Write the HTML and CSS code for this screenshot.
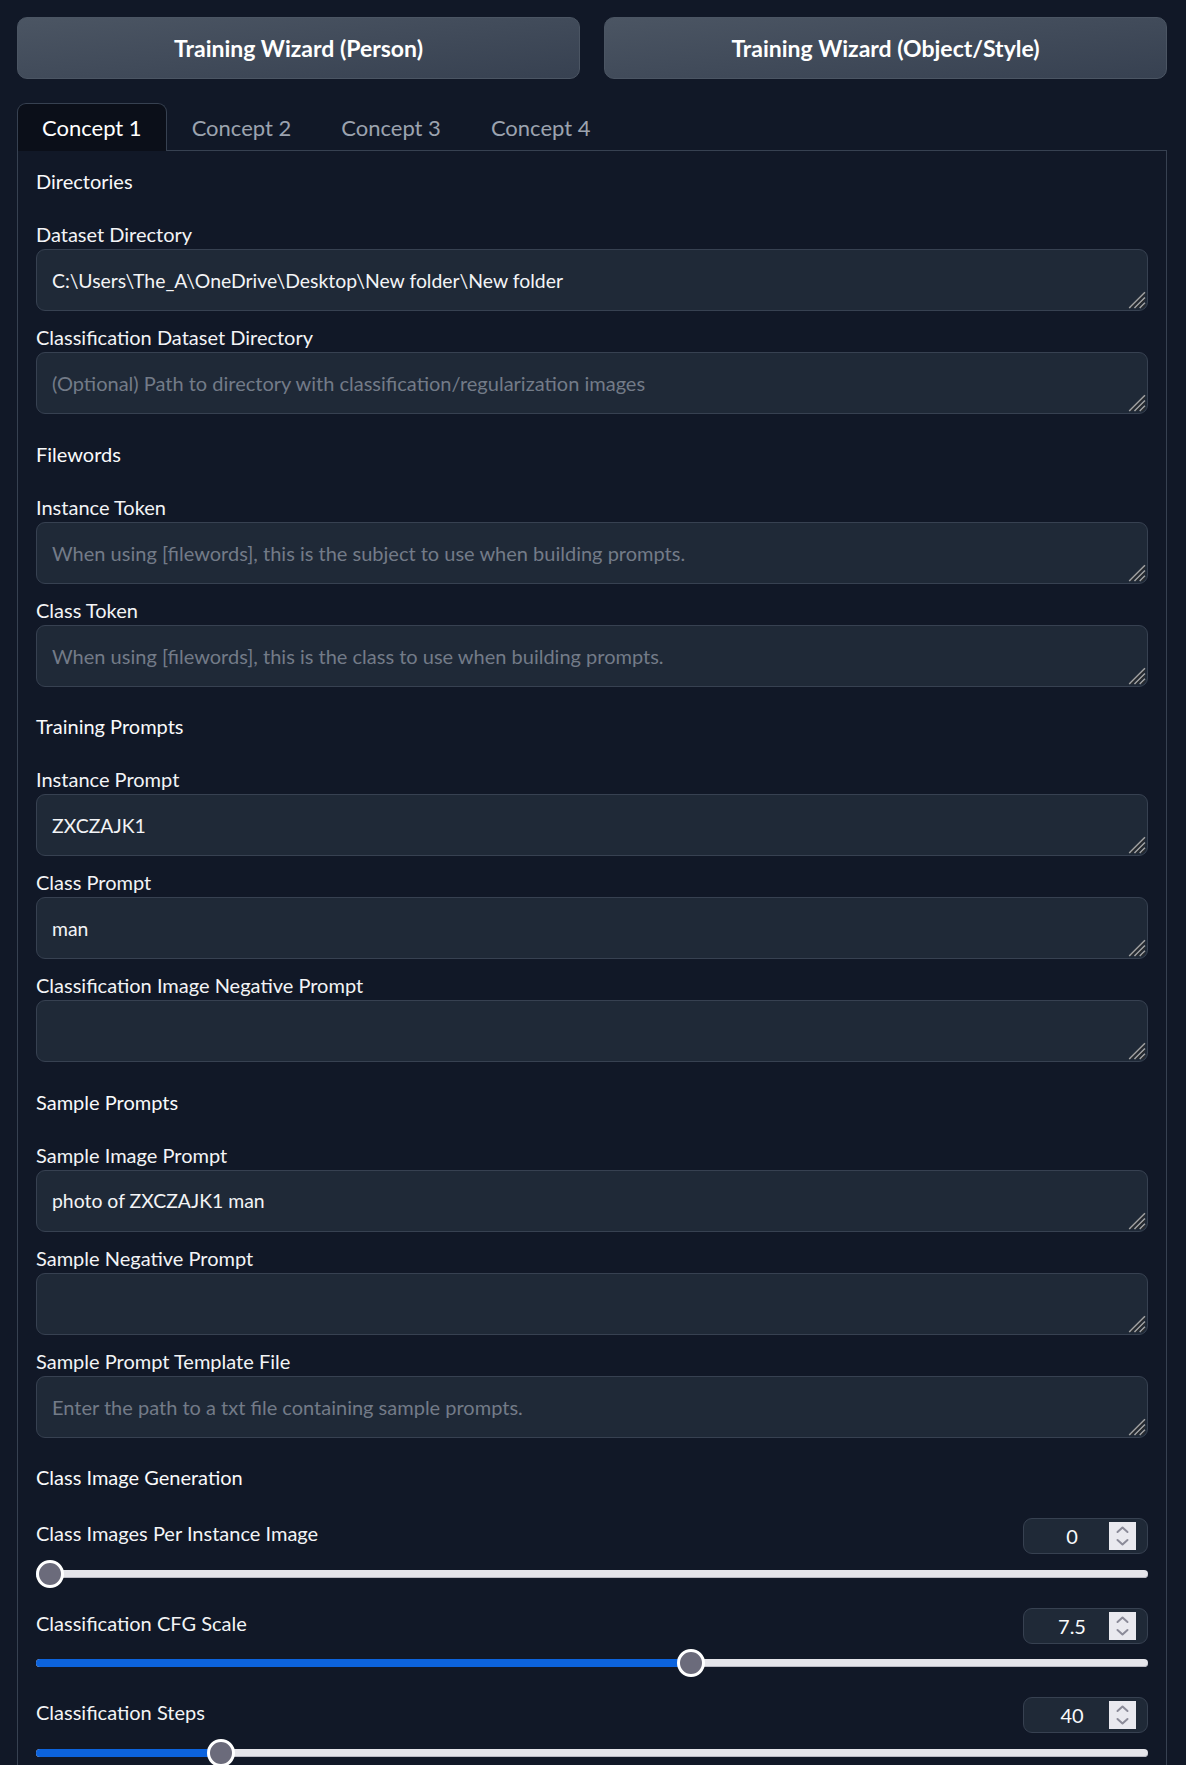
FILE: index.html
```html
<!DOCTYPE html>
<html lang="en">
<head>
<meta charset="utf-8">
<title>Dreambooth Concepts</title>
<link rel="stylesheet" href="styles.css">
</head>
<body>
<div class="app">
  <div class="wizard-row">
    <button class="wizard-btn">Training Wizard (Person)</button>
    <button class="wizard-btn">Training Wizard (Object/Style)</button>
  </div>

  <div class="tabs">
    <div class="tab-nav">
      <div class="tab selected">Concept 1</div>
      <div class="tab">Concept 2</div>
      <div class="tab">Concept 3</div>
      <div class="tab">Concept 4</div>
    </div>

    <div class="tab-panel">
      <div class="section-title">Directories</div>

      <div class="field">
        <div class="field-label">Dataset Directory</div>
        <div class="textbox"><span class="value">C:\Users\The_A\OneDrive\Desktop\New folder\New folder</span><svg class="grip" viewBox="0 0 20 20"><g class="grip-light"><line x1="4" y1="19" x2="19" y2="4"/><line x1="9" y1="19" x2="19" y2="9"/><line x1="14" y1="19" x2="19" y2="14"/></g><g class="grip-dark"><line x1="6" y1="19" x2="19" y2="6"/><line x1="11" y1="19" x2="19" y2="11"/><line x1="16" y1="19" x2="19" y2="16"/></g></svg></div>
      </div>

      <div class="field">
        <div class="field-label">Classification Dataset Directory</div>
        <div class="textbox"><span class="placeholder">(Optional) Path to directory with classification/regularization images</span><svg class="grip" viewBox="0 0 20 20"><g class="grip-light"><line x1="4" y1="19" x2="19" y2="4"/><line x1="9" y1="19" x2="19" y2="9"/><line x1="14" y1="19" x2="19" y2="14"/></g><g class="grip-dark"><line x1="6" y1="19" x2="19" y2="6"/><line x1="11" y1="19" x2="19" y2="11"/><line x1="16" y1="19" x2="19" y2="16"/></g></svg></div>
      </div>

      <div class="section-title">Filewords</div>

      <div class="field">
        <div class="field-label">Instance Token</div>
        <div class="textbox"><span class="placeholder">When using [filewords], this is the subject to use when building prompts.</span><svg class="grip" viewBox="0 0 20 20"><g class="grip-light"><line x1="4" y1="19" x2="19" y2="4"/><line x1="9" y1="19" x2="19" y2="9"/><line x1="14" y1="19" x2="19" y2="14"/></g><g class="grip-dark"><line x1="6" y1="19" x2="19" y2="6"/><line x1="11" y1="19" x2="19" y2="11"/><line x1="16" y1="19" x2="19" y2="16"/></g></svg></div>
      </div>

      <div class="field">
        <div class="field-label">Class Token</div>
        <div class="textbox"><span class="placeholder">When using [filewords], this is the class to use when building prompts.</span><svg class="grip" viewBox="0 0 20 20"><g class="grip-light"><line x1="4" y1="19" x2="19" y2="4"/><line x1="9" y1="19" x2="19" y2="9"/><line x1="14" y1="19" x2="19" y2="14"/></g><g class="grip-dark"><line x1="6" y1="19" x2="19" y2="6"/><line x1="11" y1="19" x2="19" y2="11"/><line x1="16" y1="19" x2="19" y2="16"/></g></svg></div>
      </div>

      <div class="section-title">Training Prompts</div>

      <div class="field">
        <div class="field-label">Instance Prompt</div>
        <div class="textbox"><span class="value">ZXCZAJK1</span><svg class="grip" viewBox="0 0 20 20"><g class="grip-light"><line x1="4" y1="19" x2="19" y2="4"/><line x1="9" y1="19" x2="19" y2="9"/><line x1="14" y1="19" x2="19" y2="14"/></g><g class="grip-dark"><line x1="6" y1="19" x2="19" y2="6"/><line x1="11" y1="19" x2="19" y2="11"/><line x1="16" y1="19" x2="19" y2="16"/></g></svg></div>
      </div>

      <div class="field">
        <div class="field-label">Class Prompt</div>
        <div class="textbox"><span class="value">man</span><svg class="grip" viewBox="0 0 20 20"><g class="grip-light"><line x1="4" y1="19" x2="19" y2="4"/><line x1="9" y1="19" x2="19" y2="9"/><line x1="14" y1="19" x2="19" y2="14"/></g><g class="grip-dark"><line x1="6" y1="19" x2="19" y2="6"/><line x1="11" y1="19" x2="19" y2="11"/><line x1="16" y1="19" x2="19" y2="16"/></g></svg></div>
      </div>

      <div class="field">
        <div class="field-label">Classification Image Negative Prompt</div>
        <div class="textbox"><span class="value"></span><svg class="grip" viewBox="0 0 20 20"><g class="grip-light"><line x1="4" y1="19" x2="19" y2="4"/><line x1="9" y1="19" x2="19" y2="9"/><line x1="14" y1="19" x2="19" y2="14"/></g><g class="grip-dark"><line x1="6" y1="19" x2="19" y2="6"/><line x1="11" y1="19" x2="19" y2="11"/><line x1="16" y1="19" x2="19" y2="16"/></g></svg></div>
      </div>

      <div class="section-title">Sample Prompts</div>

      <div class="field">
        <div class="field-label">Sample Image Prompt</div>
        <div class="textbox"><span class="value">photo of ZXCZAJK1 man</span><svg class="grip" viewBox="0 0 20 20"><g class="grip-light"><line x1="4" y1="19" x2="19" y2="4"/><line x1="9" y1="19" x2="19" y2="9"/><line x1="14" y1="19" x2="19" y2="14"/></g><g class="grip-dark"><line x1="6" y1="19" x2="19" y2="6"/><line x1="11" y1="19" x2="19" y2="11"/><line x1="16" y1="19" x2="19" y2="16"/></g></svg></div>
      </div>

      <div class="field">
        <div class="field-label">Sample Negative Prompt</div>
        <div class="textbox"><span class="value"></span><svg class="grip" viewBox="0 0 20 20"><g class="grip-light"><line x1="4" y1="19" x2="19" y2="4"/><line x1="9" y1="19" x2="19" y2="9"/><line x1="14" y1="19" x2="19" y2="14"/></g><g class="grip-dark"><line x1="6" y1="19" x2="19" y2="6"/><line x1="11" y1="19" x2="19" y2="11"/><line x1="16" y1="19" x2="19" y2="16"/></g></svg></div>
      </div>

      <div class="field">
        <div class="field-label">Sample Prompt Template File</div>
        <div class="textbox"><span class="placeholder">Enter the path to a txt file containing sample prompts.</span><svg class="grip" viewBox="0 0 20 20"><g class="grip-light"><line x1="4" y1="19" x2="19" y2="4"/><line x1="9" y1="19" x2="19" y2="9"/><line x1="14" y1="19" x2="19" y2="14"/></g><g class="grip-dark"><line x1="6" y1="19" x2="19" y2="6"/><line x1="11" y1="19" x2="19" y2="11"/><line x1="16" y1="19" x2="19" y2="16"/></g></svg></div>
      </div>

      <div class="section-title">Class Image Generation</div>

      <div class="slider-field">
        <div class="slider-head">
          <span class="field-label slider-label">Class Images Per Instance Image</span>
          <div class="number"><span class="num-val">0</span><span class="spin"><svg viewBox="0 0 27 28"><polyline points="8.5,10 13.5,5.5 18.5,10"/><polyline points="8.5,18 13.5,22.5 18.5,18"/></svg></span></div>
        </div>
        <div class="slider"><div class="track" style="--p:0"><div class="fill"></div><div class="thumb"></div></div></div>
      </div>

      <div class="slider-field">
        <div class="slider-head">
          <span class="field-label slider-label">Classification CFG Scale</span>
          <div class="number"><span class="num-val">7.5</span><span class="spin"><svg viewBox="0 0 27 28"><polyline points="8.5,10 13.5,5.5 18.5,10"/><polyline points="8.5,18 13.5,22.5 18.5,18"/></svg></span></div>
        </div>
        <div class="slider"><div class="track" style="--p:0.5909"><div class="fill"></div><div class="thumb"></div></div></div>
      </div>

      <div class="slider-field">
        <div class="slider-head">
          <span class="field-label slider-label">Classification Steps</span>
          <div class="number"><span class="num-val">40</span><span class="spin"><svg viewBox="0 0 27 28"><polyline points="8.5,10 13.5,5.5 18.5,10"/><polyline points="8.5,18 13.5,22.5 18.5,18"/></svg></span></div>
        </div>
        <div class="slider"><div class="track" style="--p:0.1579"><div class="fill"></div><div class="thumb"></div></div></div>
      </div>
    </div>
  </div>
</div>
</body>
</html>
```

FILE: styles.css
```css
* { box-sizing: border-box; }

html, body {
  margin: 0;
  background: #111827;
}

body {
  font-family: Lato, "Noto Sans", "Liberation Sans", sans-serif;
  color: #f3f4f6;
}

.app {
  padding: 17px 19px 0 17px;
}

.wizard-row {
  display: flex;
  gap: 24px;
}

.wizard-btn {
  flex: 1;
  height: 62px;
  border: 1px solid #4b5563;
  border-radius: 10px;
  background: linear-gradient(to bottom right, #4b5563, #374151);
  color: #ffffff;
  font-family: Lato, "Noto Sans", sans-serif;
  font-weight: 700;
  font-size: 23px;
  cursor: pointer;
}

.tabs {
  margin-top: 24px;
}

.tab-nav {
  display: flex;
  border-bottom: 1px solid #374151;
}

.tab {
  height: 48px;
  margin-bottom: -1px;
  padding: 0 24px;
  line-height: 47px;
  font-size: 22px;
  color: #9ca3af;
  border: 1px solid transparent;
  border-bottom: none;
  border-radius: 9px 9px 0 0;
}

.tab.selected {
  background: #0b0f19;
  border-color: #374151;
  color: #ffffff;
}

.tab-panel {
  border-left: 1px solid #374151;
  border-right: 1px solid #374151;
  padding: 18px 18px 40px 18px;
  display: flex;
  flex-direction: column;
  gap: 14px;
}

.section-title {
  font-size: 20px;
  line-height: 24px;
  margin: 13.5px 0 15px;
  color: #f9fafb;
}

.section-title:first-child {
  margin-top: 0;
}

.field {
  display: flex;
  flex-direction: column;
}

.field-label {
  font-size: 20px;
  line-height: 24px;
  margin-bottom: 3px;
  color: #f3f4f6;
}

.textbox {
  position: relative;
  height: 62px;
  border: 1px solid #374151;
  border-radius: 9px;
  background: #1f2937;
  padding: 0 15px;
  display: flex;
  align-items: center;
  font-size: 20px;
}

.value {
  color: #f3f4f6;
  font-size: 19.4px;
}

.placeholder {
  color: #737b88;
}

.grip {
  position: absolute;
  right: 1px;
  bottom: 1px;
  width: 21px;
  height: 21px;
}

.grip-light line {
  stroke: #a3a3a3;
  stroke-width: 1.4;
}

.grip-dark line {
  stroke: #2b2b2b;
  stroke-width: 1;
}

.slider-field {
  display: flex;
  flex-direction: column;
}

.slider-head {
  display: flex;
  justify-content: space-between;
  align-items: center;
  height: 36px;
}

.slider-label {
  margin-bottom: 6px;
}

.number {
  width: 125px;
  height: 36px;
  border: 1px solid #374151;
  border-radius: 9px;
  background: #1f2937;
  display: flex;
  align-items: center;
  padding: 0 11px 0 11px;
}

.num-val {
  flex: 1;
  text-align: center;
  font-size: 20px;
  color: #f9fafb;
}

.spin {
  width: 27px;
  height: 28px;
  background: #e9e9ef;
  display: block;
}

.spin svg {
  display: block;
  width: 27px;
  height: 28px;
}

.spin polyline {
  fill: none;
  stroke: #8b8b99;
  stroke-width: 2;
  stroke-linecap: round;
  stroke-linejoin: round;
}

.slider {
  height: 39.5px;
  display: flex;
  align-items: center;
}

.track {
  position: relative;
  width: 100%;
  height: 8px;
  background: #e5e5ea;
  border-radius: 4px;
  box-shadow: inset 0 -1px 0 #b9b9c2;
}

.fill {
  position: absolute;
  left: 0;
  top: 0;
  bottom: 0;
  width: calc(var(--p) * (100% - 28px) + 14px);
  background: #0c63dd;
  border-radius: 4px;
}

.thumb {
  position: absolute;
  top: 50%;
  left: calc(var(--p) * (100% - 28px));
  width: 28px;
  height: 28px;
  margin-top: -14px;
  border: 3px solid #ffffff;
  border-radius: 50%;
  background: #6b6b7b;
}
```
